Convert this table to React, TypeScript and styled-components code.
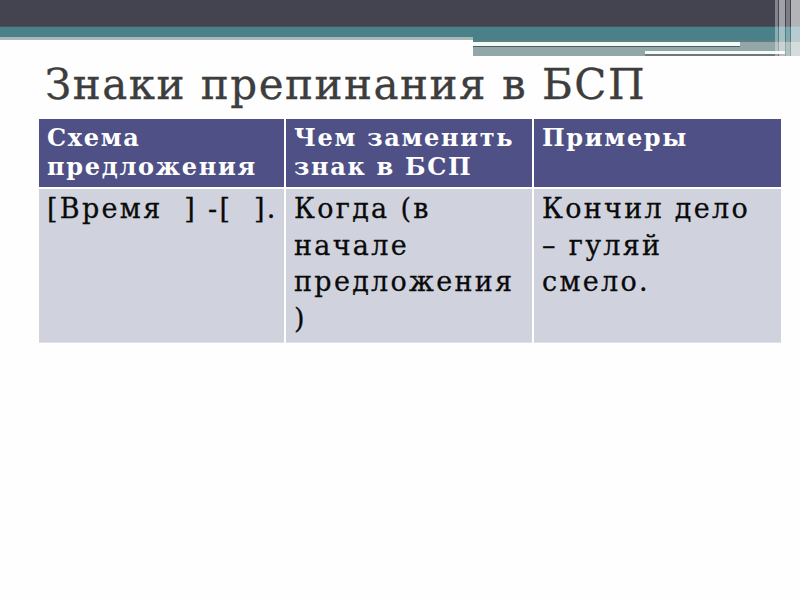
import React from "react";
import styled, { createGlobalStyle } from "styled-components";

const Global = createGlobalStyle`
  html, body { margin: 0; padding: 0; background: #ffffff; }
  body { font-family: "DejaVu Serif", "Liberation Serif", serif; }
`;

const Slide = styled.div`
  position: relative;
  width: 800px;
  height: 600px;
  overflow: hidden;
  background: #fefefe;
  display: flex;
  flex-direction: column;
`;

const Banner = styled.svg`
  display: block;
  width: 800px;
  height: 58px;
  flex: none;
`;

const Title = styled.h1`
  margin: 0;
  padding: 3px 0 0 45px;
  height: 58px;
  box-sizing: border-box;
  font-family: "DejaVu Serif", "Liberation Serif", serif;
  font-weight: normal;
  font-size: 42px;
  line-height: 48px;
  color: #3d3d3d;
  letter-spacing: 1.5px;
  white-space: nowrap;
  -webkit-text-stroke: 0.3px #3d3d3d;
`;

const Table = styled.table`
  margin: 3px 0 0 39px;
  width: 742px;
  border-collapse: collapse;
  table-layout: fixed;
`;

const HeadCell = styled.th<{ $w: number }>`
  width: ${(p) => p.$w}px;
  background: #4f5186;
  color: #ffffff;
  font-family: "DejaVu Serif", "Liberation Serif", serif;
  font-weight: bold;
  font-size: 24px;
  line-height: 29px;
  letter-spacing: 1.7px;
  text-align: left;
  vertical-align: top;
  padding: 4px 6px 6px 8px;
  height: 69px;
  box-sizing: border-box;
  border-right: 2px solid #ffffff;
  border-bottom: 2px solid #ffffff;
  white-space: pre;
  &:last-child { border-right: none; }
`;

const BodyCell = styled.td`
  background: #d0d3dd;
  color: #0a0a0a;
  font-family: "DejaVu Serif", "Liberation Serif", serif;
  font-size: 27px;
  line-height: 36.5px;
  letter-spacing: 2.3px;
  text-align: left;
  vertical-align: top;
  padding: 2px 4px 5px 8px;
  height: 152px;
  box-sizing: border-box;
  border-right: 2px solid #ffffff;
  border-bottom: 1px solid #dfe1e8;
  white-space: pre;
  -webkit-text-stroke: 0.3px #0a0a0a;
  &:last-child { border-right: none; }
`;

export default function App() {
  return (
    <>
      <Global />
      <Slide>
        <Banner viewBox="0 0 800 58">
          <rect x="0" y="0" width="800" height="26" fill="#43444f" />
          <rect x="0" y="26" width="800" height="1" fill="#3a5a60" />
          <rect x="0" y="27" width="473" height="10" fill="#4a8189" />
          <rect x="0" y="37" width="473" height="3" fill="#a9b9ba" />
          <rect x="473" y="27" width="327" height="13" fill="#4a8189" />
          <rect x="473" y="40" width="327" height="2" fill="#5e7e80" />
          <rect x="473" y="42" width="327" height="14" fill="#93a7a8" />
          <rect x="473" y="42" width="267" height="4" fill="#f0fafa" />
          <rect x="473" y="46" width="267" height="1" fill="#4f5c5c" />
          <rect x="645" y="51" width="140" height="3" fill="#f4fbfb" />
          <rect x="645" y="54" width="140" height="2" fill="#6f7777" />
          <rect x="775" y="0" width="3" height="58" fill="#ffffff" opacity="0.35" />
          <rect x="779" y="0" width="6" height="58" fill="#ffffff" opacity="0.5" />
          <rect x="786" y="0" width="4" height="58" fill="#ffffff" opacity="0.3" />
          <rect x="791" y="0" width="9" height="58" fill="#ffffff" opacity="0.6" />
        </Banner>
        <Title>Знаки препинания в БСП</Title>
        <Table>
          <thead>
            <tr>
              <HeadCell $w={246}>{"Схема\nпредложения"}</HeadCell>
              <HeadCell $w={248}>{"Чем заменить\nзнак в БСП"}</HeadCell>
              <HeadCell $w={248}>Примеры</HeadCell>
            </tr>
          </thead>
          <tbody>
            <tr>
              <BodyCell>{"[Время  ] -[  ]."}</BodyCell>
              <BodyCell>{"Когда (в\nначале\nпредложения\n)"}</BodyCell>
              <BodyCell>{"Кончил дело\n– гуляй\nсмело."}</BodyCell>
            </tr>
          </tbody>
        </Table>
      </Slide>
    </>
  );
}
